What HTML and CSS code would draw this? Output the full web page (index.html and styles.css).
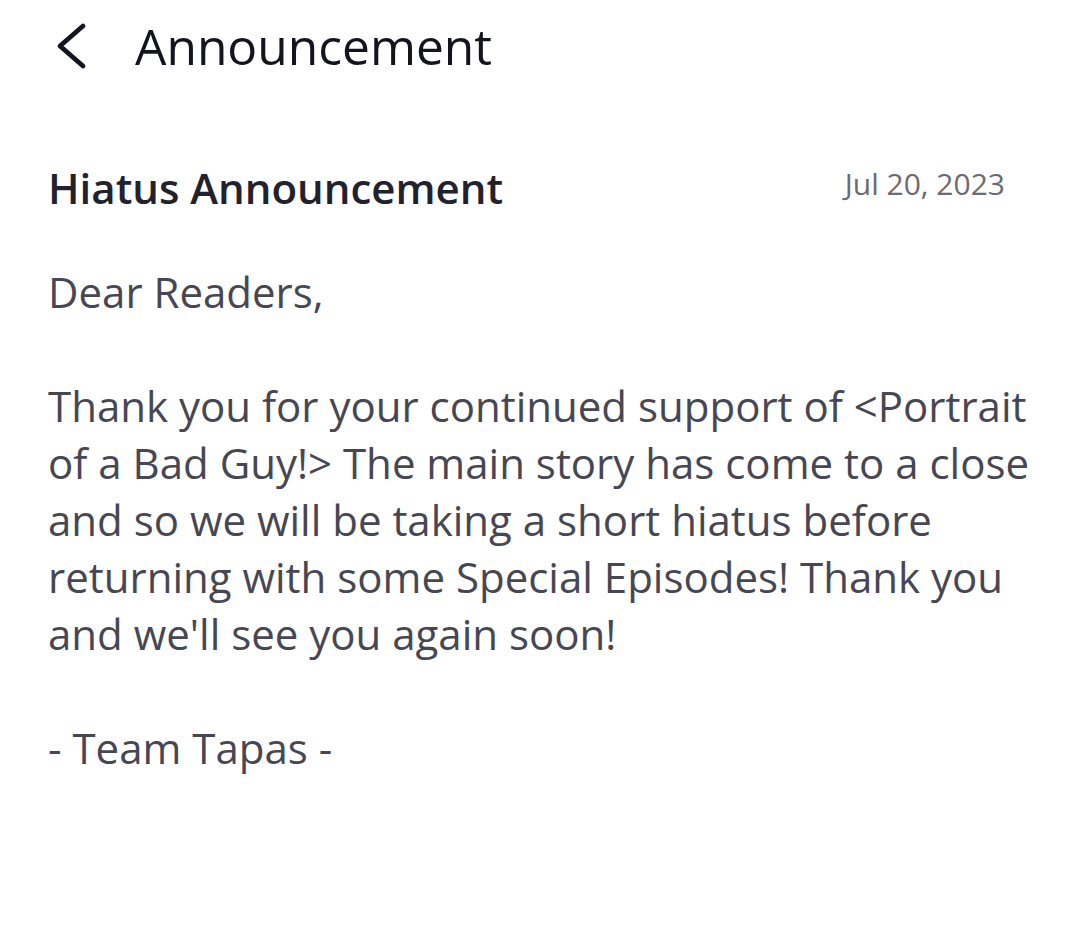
FILE: index.html
```html
<!DOCTYPE html>
<html>
<head>
    <title>Announcement</title>
    <link rel="stylesheet" href="styles.css">
</head>
<body>
    <header class="top-bar">
        <button class="back-button" aria-label="Back">
            <svg width="34" height="48" viewBox="0 0 34 48">
                <path d="M29 4 L6 24 L29 44" fill="none" stroke="#15151f" stroke-width="4.8" stroke-linecap="round" stroke-linejoin="round"/>
            </svg>
        </button>
        <h1 class="page-title">Announcement</h1>
    </header>

    <main class="notice">
        <div class="notice-head">
            <h2 class="notice-title">Hiatus Announcement</h2>
            <span class="notice-date">Jul 20, 2023</span>
        </div>
        <div class="notice-body">
            <p>Dear Readers,</p>
            <p>Thank you for your continued support of &lt;Portrait of a Bad Guy!&gt; The main story has come to a close and so we will be taking a short hiatus before returning with some Special Episodes! Thank you and we'll see you again soon!</p>
            <p>- Team Tapas -</p>
        </div>
    </main>
</body>
</html>
```

FILE: styles.css
```css
/* Announcement screen */
body {
    font-family: 'Open Sans', sans-serif;
    background-color: #fff;
    color: #1b1b26;
    margin: 0;
}

.top-bar {
    display: flex;
    align-items: center;
    height: 92px;
    padding-left: 54px;
}

.back-button {
    background: none;
    border: none;
    padding: 0;
    width: 34px;
    height: 48px;
    margin-right: 47px;
    cursor: pointer;
}

.back-button svg {
    display: block;
}

.page-title {
    font-size: 49.7px;
    font-weight: 500;
    margin: 0;
    color: #14141e;
}

.notice {
    padding: 67px 38px 0 48px;
}

.notice-head {
    display: flex;
    justify-content: space-between;
    align-items: flex-start;
    padding-right: 37px;
}

.notice-title {
    font-size: 42px;
    font-weight: 600;
    margin: 0;
    color: #22222e;
}

.notice-date {
    font-size: 30px;
    color: #6b6b73;
    margin-top: 4px;
}

.notice-body {
    margin-top: 47px;
    font-size: 42px;
    line-height: 57px;
    color: #474753;
}

.notice-body p {
    margin: 0 0 57px;
}
```
